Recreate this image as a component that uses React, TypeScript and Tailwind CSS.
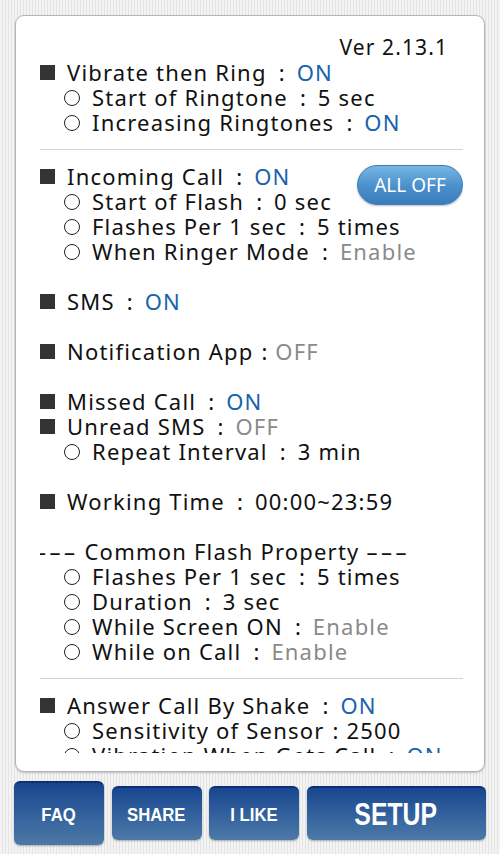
import React from 'react';

type Part = { t: string; c?: 'on' | 'dim' };
type Line =
  | { kind: 'main' | 'sub'; parts: Part[] }
  | { kind: 'gap' }
  | { kind: 'rule' }
  | { kind: 'title'; text: string };

const sections: Line[] = [
  { kind: 'main', parts: [{ t: 'Vibrate then Ring：' }, { t: 'ON', c: 'on' }] },
  { kind: 'sub', parts: [{ t: 'Start of Ringtone：5 sec' }] },
  { kind: 'sub', parts: [{ t: 'Increasing Ringtones：' }, { t: 'ON', c: 'on' }] },
  { kind: 'rule' },
  { kind: 'main', parts: [{ t: 'Incoming Call：' }, { t: 'ON', c: 'on' }] },
  { kind: 'sub', parts: [{ t: 'Start of Flash：0 sec' }] },
  { kind: 'sub', parts: [{ t: 'Flashes Per 1 sec：5 times' }] },
  { kind: 'sub', parts: [{ t: 'When Ringer Mode：' }, { t: 'Enable', c: 'dim' }] },
  { kind: 'gap' },
  { kind: 'main', parts: [{ t: 'SMS：' }, { t: 'ON', c: 'on' }] },
  { kind: 'gap' },
  { kind: 'main', parts: [{ t: 'Notification App:' }, { t: 'OFF', c: 'dim' }] },
  { kind: 'gap' },
  { kind: 'main', parts: [{ t: 'Missed Call：' }, { t: 'ON', c: 'on' }] },
  { kind: 'main', parts: [{ t: 'Unread SMS：' }, { t: 'OFF', c: 'dim' }] },
  { kind: 'sub', parts: [{ t: 'Repeat Interval：3 min' }] },
  { kind: 'gap' },
  { kind: 'main', parts: [{ t: 'Working Time：00:00~23:59' }] },
  { kind: 'gap' },
  { kind: 'title', text: 'Common Flash Property' },
  { kind: 'sub', parts: [{ t: 'Flashes Per 1 sec：5 times' }] },
  { kind: 'sub', parts: [{ t: 'Duration：3 sec' }] },
  { kind: 'sub', parts: [{ t: 'While Screen ON：' }, { t: 'Enable', c: 'dim' }] },
  { kind: 'sub', parts: [{ t: 'While on Call：' }, { t: 'Enable', c: 'dim' }] },
  { kind: 'rule' },
  { kind: 'main', parts: [{ t: 'Answer Call By Shake：' }, { t: 'ON', c: 'on' }] },
  { kind: 'sub', parts: [{ t: 'Sensitivity of Sensor:2500' }] },
  { kind: 'sub', parts: [{ t: 'Vibration When Gets Call：' }, { t: 'ON', c: 'on' }] },
];

// split text on the colons so the wide one gets its own box, like the app's font
function Chunk({ text }: { text: string }) {
  const bits = text.split(/([：:](?!\d\d~|\d\d$))/);
  return (
    <>
      {bits.map((b, i) =>
        b === '：' ? (
          <span key={i} className="inline-block w-[30px] text-center tracking-normal">
            :
          </span>
        ) : b === ':' ? (
          <span key={i} className="inline-block w-[22px] text-center tracking-normal">
            :
          </span>
        ) : (
          <span key={i}>{b}</span>
        )
      )}
    </>
  );
}

function Text({ parts }: { parts: Part[] }) {
  return (
    <span>
      {parts.map((p, i) => (
        <span
          key={i}
          className={p.c === 'on' ? 'text-[#1763ad]' : p.c === 'dim' ? 'text-[#8a8a8a]' : ''}
        >
          <Chunk text={p.t} />
        </span>
      ))}
    </span>
  );
}

function Row({ line, idx }: { line: Line; idx: number }) {
  if (line.kind === 'gap') return <div className="h-[25px]" />;
  if (line.kind === 'rule')
    return (
      <div className="-mx-[3px] flex h-[29px] items-center">
        <div className="h-px w-full bg-[#d4d4d4]" />
      </div>
    );
  if (line.kind === 'title')
    return (
      <div className="-ml-[5px] flex h-[25px] items-center whitespace-nowrap">
        <span className="mr-[6px] tracking-[3.5px]">–––</span>
        {line.text}
        <span className="ml-[7px] tracking-[3.5px]">–––</span>
      </div>
    );

  const main = line.kind === 'main';
  return (
    <div className="relative flex h-[25px] items-center whitespace-nowrap">
      {main ? (
        <span className="mr-[12px] inline-block h-[15px] w-[15px] shrink-0 bg-[#333]" />
      ) : (
        <span className="ml-[24px] mr-[12px] inline-block h-[16px] w-[16px] shrink-0 rounded-full border-[1.5px] border-[#222]" />
      )}
      <Text parts={line.parts} />
      {idx === 4 && (
        <button className="absolute right-0 top-[1px] flex h-[40px] w-[106px] items-center justify-center rounded-full border border-[#3d7cb8] bg-[linear-gradient(#75b6e2,#4a8fcb_55%,#3a7cbc)] text-[19px] leading-none tracking-normal text-white shadow-[0_1px_2px_rgba(0,0,0,0.25)]">
          ALL OFF
        </button>
      )}
    </div>
  );
}

function NavButton({ label, wide, active }: { label: string; wide?: boolean; active?: boolean }) {
  return (
    <button
      className={`flex items-center justify-center overflow-hidden rounded-[6px] border-t-2 border-[#0d2f78] bg-[linear-gradient(#18468f,#3a68a0_65%,#4c79a7)] font-bold text-white shadow-[0_1px_2px_rgba(0,0,0,0.3)] ${
        wide ? 'h-[54px] w-[179px]' : active ? 'h-[64px] w-[90px]' : 'h-[54px] w-[90px]'
      }`}
      style={{ fontFamily: '"Liberation Sans", Arial, sans-serif' }}
    >
      <span
        className={
          wide
            ? 'inline-block scale-x-[0.8] text-[31px] leading-none'
            : 'inline-block scale-x-[0.88] text-[19px] leading-none'
        }
      >
        {label}
      </span>
    </button>
  );
}

export default function App() {
  return (
    <div className="flex h-[854px] w-[500px] flex-col bg-[repeating-linear-gradient(90deg,#f3f3f3_0px,#f3f3f3_2px,#e4e4e4_2px,#e4e4e4_3px)] px-[14px] pt-[15px]">
      <div className="mx-px h-[757px] rounded-[9px] border border-[#b5b5b5] bg-white pb-[18px] pl-[24px] pr-[21px] pt-[19px] shadow-[0_1px_2px_rgba(0,0,0,0.2)]">
        <div
          className="h-full overflow-hidden text-[22px] leading-[25px] tracking-[1.2px] text-[#111]"
          style={{ fontFamily: '"Noto Sans", "Noto Sans CJK KR", sans-serif' }}
        >
          <div className="h-[25px] pr-[15px] text-right text-[21px] tracking-[1.1px]">Ver 2.13.1</div>
          {sections.map((line, i) => (
            <Row key={i} line={line} idx={i} />
          ))}
        </div>
      </div>
      <div className="mt-[9px] flex items-center gap-[7.5px]">
        <NavButton label="FAQ" active />
        <NavButton label="SHARE" />
        <NavButton label="I LIKE" />
        <NavButton label="SETUP" wide />
      </div>
    </div>
  );
}
